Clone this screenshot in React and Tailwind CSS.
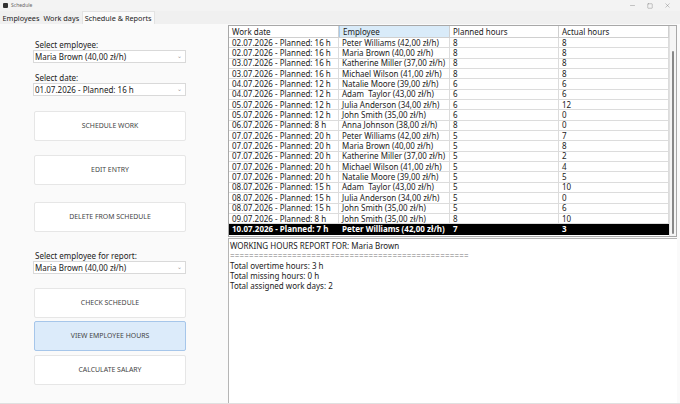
import { Minus, Square, X } from 'lucide-react';

const ROWS = [
  ['02.07.2026 - Planned: 16 h', 'Peter Williams (42,00 zł/h)', '8', '8'],
  ['02.07.2026 - Planned: 16 h', 'Maria Brown (40,00 zł/h)', '8', '8'],
  ['03.07.2026 - Planned: 16 h', 'Katherine Miller (37,00 zł/h)', '8', '8'],
  ['03.07.2026 - Planned: 16 h', 'Michael Wilson (41,00 zł/h)', '8', '8'],
  ['04.07.2026 - Planned: 12 h', 'Natalie Moore (39,00 zł/h)', '6', '6'],
  ['04.07.2026 - Planned: 12 h', 'Adam  Taylor (43,00 zł/h)', '6', '6'],
  ['05.07.2026 - Planned: 12 h', 'Julia Anderson (34,00 zł/h)', '6', '12'],
  ['05.07.2026 - Planned: 12 h', 'John Smith (35,00 zł/h)', '6', '0'],
  ['06.07.2026 - Planned: 8 h', 'Anna Johnson (38,00 zł/h)', '8', '0'],
  ['07.07.2026 - Planned: 20 h', 'Peter Williams (42,00 zł/h)', '5', '7'],
  ['07.07.2026 - Planned: 20 h', 'Maria Brown (40,00 zł/h)', '5', '8'],
  ['07.07.2026 - Planned: 20 h', 'Katherine Miller (37,00 zł/h)', '5', '2'],
  ['07.07.2026 - Planned: 20 h', 'Michael Wilson (41,00 zł/h)', '5', '4'],
  ['07.07.2026 - Planned: 20 h', 'Natalie Moore (39,00 zł/h)', '5', '5'],
  ['08.07.2026 - Planned: 15 h', 'Adam  Taylor (43,00 zł/h)', '5', '10'],
  ['08.07.2026 - Planned: 15 h', 'Julia Anderson (34,00 zł/h)', '5', '0'],
  ['08.07.2026 - Planned: 15 h', 'John Smith (35,00 zł/h)', '5', '6'],
  ['09.07.2026 - Planned: 8 h', 'John Smith (35,00 zł/h)', '8', '10'],
  ['10.07.2026 - Planned: 7 h', 'Peter Williams (42,00 zł/h)', '7', '3'],
];

const COLS = ['w-[110px]', 'w-[111px]', 'w-[109px]', 'w-[110px]'];

function Select({ value }) {
  return (
    <div className="h-[13px] w-[153px] bg-white border border-[#d9d9d9] flex items-center justify-between pl-[1px] pr-[3px]">
      <span className="whitespace-pre">{value}</span>
      <span className="text-[6px] text-[#999]">⌄</span>
    </div>
  );
}

function Btn({ label, active, className = '' }) {
  return (
    <div className={`h-[30px] w-[152px] ml-[1px] flex items-center justify-center rounded-[2px] border text-[6.9px] text-[#444] ${active ? 'bg-[#dcebfa] border-[#a6c6ea]' : 'bg-white border-[#e6e6e6]'} ${className}`}>
      {label}
    </div>
  );
}

export default function App() {
  return (
    <div className="w-[680px] h-[404px] bg-[#fafafa] flex flex-col text-[8px] text-[#222] overflow-hidden" style={{ fontFamily: '"Noto Sans", "Open Sans", sans-serif' }}>
      <div className="h-[11px] flex items-center bg-[#f3f3f3]">
        <span className="ml-[3px] w-[5px] h-[5px] bg-[#333] rounded-[1px]" />
        <span className="ml-[3px] text-[5px] text-[#666]">Schedule</span>
        <div className="ml-auto flex items-center gap-[11px] mr-[9px] text-[#666]">
          <Minus size={7} strokeWidth={1.2} />
          <Square size={6} strokeWidth={1.4} />
          <X size={7} strokeWidth={1.2} />
        </div>
      </div>
      <div className="h-[13px] flex items-end bg-[#f0f0f0] text-[7.3px] pl-[1px]">
        <div className="px-[1.5px] h-[12px] flex items-center">Employees</div>
        <div className="px-[1.5px] ml-[1px] h-[12px] flex items-center">Work days</div>
        <div className="px-[2px] ml-[1px] h-[13px] flex items-center bg-[#fafafa] border-t border-x border-[#e3e3e3]">Schedule &amp; Reports</div>
      </div>
      <div className="flex flex-1 border-b border-[#e0e0e0]">
        <div className="w-[228px] pl-[33px] pt-[16px] flex flex-col">
          <div className="h-[10px] pl-[2px] leading-[10px]">Select employee:</div>
          <Select value="Maria Brown (40,00 zł/h)" />
          <div className="h-[10px] pl-[2px] mt-[10px] leading-[10px]">Select date:</div>
          <Select value="01.07.2026 - Planned: 16 h" />
          <Btn label="SCHEDULE WORK" className="mt-[15px]" />
          <Btn label="EDIT ENTRY" className="mt-[14px]" />
          <Btn label="DELETE FROM SCHEDULE" className="mt-[17px]" />
          <div className="h-[10px] pl-[2px] mt-[19px] leading-[10px]">Select employee for report:</div>
          <Select value="Maria Brown (40,00 zł/h)" />
          <Btn label="CHECK SCHEDULE" className="mt-[14px]" />
          <Btn label="VIEW EMPLOYEE HOURS" active className="mt-[3px]" />
          <Btn label="CALCULATE SALARY" className="mt-[4px]" />
        </div>
        <div className="w-[449px] flex flex-col">
          <div className="h-[212px] mt-[1px] bg-white border border-[#a8a8a8] flex">
            <div className="flex flex-col">
              <div className="flex h-[12px] border-b border-[#d0d0d0]">
                {['Work date', 'Employee', 'Planned hours', 'Actual hours'].map((h, i) => (
                  <div key={h} className={`${COLS[i]} px-[3px] flex items-center border-r border-[#d0d0d0] ${i === 1 ? 'bg-[#d9ebf9] border-l border-l-[#a9cbea]' : ''}`}>{h}</div>
                ))}
              </div>
              {ROWS.map((r, ri) => {
                const sel = ri === ROWS.length - 1;
                return (
                  <div key={ri} className={`flex h-[10.35px] border-b ${sel ? 'bg-black text-white font-bold border-black' : 'border-[#dcdcdc]'}`}>
                    {r.map((c, ci) => (
                      <div key={ci} className={`${COLS[ci]} px-[3px] flex items-center whitespace-pre leading-none ${sel ? '' : 'border-r border-[#dcdcdc]'}`}>{c}</div>
                    ))}
                  </div>
                );
              })}
            </div>
            <div className="w-[8px] bg-[#f5f5f5] border-l border-[#e0e0e0] flex justify-center">
              <div className="w-[2px] bg-[#888] rounded-full mt-[25px] mb-[2px]" />
            </div>
          </div>
          <div className="flex-1 mt-[1px] bg-white border-t border-l border-[#b5b5b5] pl-[1px] pt-[2px] leading-[10px]">
            <div>WORKING HOURS REPORT FOR: Maria Brown</div>
            <div className="text-[#777] tracking-[0.2px]">==================================================</div>
            <div>Total overtime hours: 3 h</div>
            <div>Total missing hours: 0 h</div>
            <div>Total assigned work days: 2</div>
          </div>
        </div>
      </div>
    </div>
  );
}
